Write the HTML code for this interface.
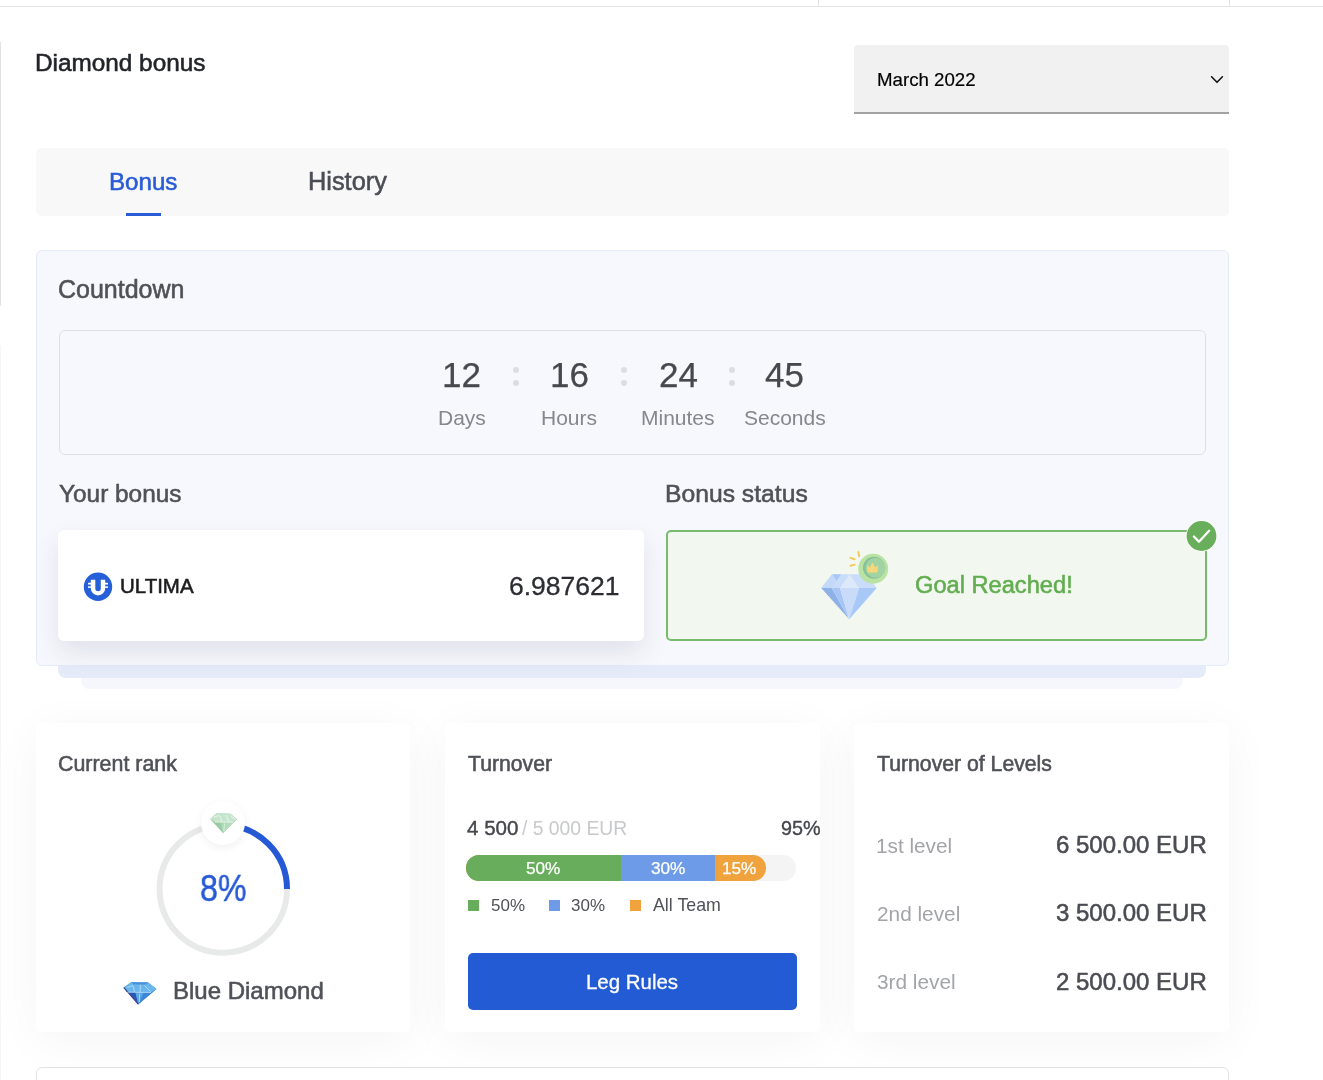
<!DOCTYPE html>
<html>
<head>
<meta charset="utf-8">
<style>
html,body{margin:0;padding:0;}
body{width:1323px;height:1080px;position:relative;overflow:hidden;background:#ffffff;font-family:"Liberation Sans",sans-serif;}
.a{position:absolute;box-sizing:border-box;}
.t{position:absolute;white-space:nowrap;will-change:transform;font-family:"Liberation Sans",sans-serif;font-weight:400;}
</style>
</head>
<body>
<!-- top table remnants -->
<div class="a" style="left:0;top:6px;width:1323px;height:1px;background:#e4e4e4"></div>
<div class="a" style="left:818px;top:0;width:1px;height:6px;background:#e4e4e4"></div>
<div class="a" style="left:1229px;top:0;width:1px;height:6px;background:#e4e4e4"></div>
<!-- left edge line -->
<div class="a" style="left:0;top:42px;width:1px;height:264px;background:#e2e2e2"></div>
<div class="a" style="left:0;top:345px;width:1px;height:735px;background:#f6f6f6"></div>

<!-- select -->
<div class="a" style="left:854px;top:45px;width:375px;height:69px;background:#f1f1f1;border-bottom:2px solid #a2a2a2;border-radius:4px 4px 0 0"></div>
<svg class="a" style="left:1209px;top:74px" width="16" height="11" viewBox="0 0 16 11"><path d="M2.6 2.8 L8 8.3 L13.4 2.8" fill="none" stroke="#111" stroke-width="1.6" stroke-linecap="round" stroke-linejoin="round"/></svg>

<!-- tabs -->
<div class="a" style="left:36px;top:148px;width:1193px;height:68px;background:#f8f8f8;border-radius:5px"></div>
<div class="a" style="left:126px;top:213px;width:35px;height:3px;background:#2a5bd7"></div>

<!-- panel layers -->
<div class="a" style="left:81px;top:650px;width:1102px;height:39px;background:#f5f7fd;border-radius:0 0 8px 8px"></div>
<div class="a" style="left:58px;top:650px;width:1148px;height:28px;background:#e5ebf8;border-radius:0 0 8px 8px"></div>
<div class="a" style="left:36px;top:250px;width:1193px;height:416px;background:#f6f8fd;border:1px solid #e3eaf8;border-radius:6px"></div>

<!-- countdown box -->
<div class="a" style="left:59px;top:330px;width:1147px;height:125px;border:1px solid #dfe0e4;border-radius:6px"></div>
<div class="a" style="left:512.7px;top:366.5px;width:6px;height:6px;border-radius:3px;background:#dcdde2"></div>
<div class="a" style="left:512.7px;top:380.3px;width:6px;height:6px;border-radius:3px;background:#dcdde2"></div>
<div class="a" style="left:620.7px;top:366.5px;width:6px;height:6px;border-radius:3px;background:#dcdde2"></div>
<div class="a" style="left:620.7px;top:380.3px;width:6px;height:6px;border-radius:3px;background:#dcdde2"></div>
<div class="a" style="left:728.9px;top:366.5px;width:6px;height:6px;border-radius:3px;background:#dcdde2"></div>
<div class="a" style="left:728.9px;top:380.3px;width:6px;height:6px;border-radius:3px;background:#dcdde2"></div>

<!-- bonus card -->
<div class="a" style="left:58px;top:530px;width:586px;height:111px;background:#ffffff;border-radius:6px;box-shadow:0 12px 26px rgba(30,35,60,0.10)"></div>
<svg class="a" style="left:80px;top:568px" width="36" height="36" viewBox="0 0 36 36">
<circle cx="18" cy="18.75" r="14.2" fill="#2560d8"/>
<path d="M10.8 11.7 H15.3 V20.5 A2.75 2.75 0 0 0 20.8 20.5 V11.7 H25.2 V20.2 A7.2 7.3 0 0 1 10.8 20.2 Z" fill="#fff"/>
<rect x="8" y="14.8" width="3" height="1.7" fill="#fff"/><rect x="8" y="18.2" width="3" height="1.8" fill="#dfe7fa"/>
<rect x="25" y="14.8" width="3" height="1.7" fill="#fff"/><rect x="25" y="18.2" width="3" height="1.8" fill="#dfe7fa"/>
</svg>

<!-- status card -->
<div class="a" style="left:666px;top:530px;width:541px;height:111px;background:#f2f8f0;border:2px solid #78bb6d;border-radius:5px"></div>
<svg class="a" style="left:800px;top:540px" width="100" height="90" viewBox="0 0 100 90">
<polygon points="32.1,34.2 65.9,34.2 76.7,47.9 21.25,47.9" fill="#c9dcfa"/>
<polygon points="32.1,34.2 41,34.2 36.5,41" fill="#a8c7f7"/>
<polygon points="40,47.9 49.5,34.2 59,47.9" fill="#dde9fb"/>
<polygon points="21.25,47.9 32.1,34.2 36.5,41 31.7,47.9" fill="#c4d9f9"/>
<polygon points="21.25,47.9 31.7,47.9 49.2,79.2" fill="#8eb1e7"/>
<polygon points="31.7,47.9 40,47.9 49.2,79.2" fill="#a7c6f6"/>
<polygon points="40,47.9 59,47.9 49.2,79.2" fill="#c8dcfa"/>
<polygon points="59,47.9 76.7,47.9 49.2,79.2" fill="#a8c9f8"/>
<circle cx="73.2" cy="28.75" r="15" fill="#b9e2a3"/>
<circle cx="74" cy="27.8" r="11" fill="#86c19b"/>
<circle cx="75.5" cy="27.8" r="10" fill="#a2d3a3"/>
<path d="M67 25 L69.8 27.5 L72.5 22.5 L75.2 27.5 L78 25 L77.4 32.5 L67.6 32.5 Z" fill="#f8d77c"/>
<path d="M58.3 12.1 L59.2 16.2 M50.4 17.9 L54.6 19.2 M50.4 25.8 L54.6 24.6" stroke="#f6c95c" stroke-width="2" stroke-linecap="round"/>
</svg>
<svg class="a" style="left:1184px;top:518px" width="36" height="36" viewBox="0 0 36 36">
<circle cx="17.5" cy="18" r="15.6" fill="#ffffff"/>
<circle cx="17.5" cy="18" r="14.9" fill="#69ae5b"/>
<path d="M9.9 18.5 L15 23.7 L25.1 12.8" fill="none" stroke="#fff" stroke-width="2.3" stroke-linecap="round" stroke-linejoin="round"/>
</svg>

<!-- bottom cards -->
<div class="a" style="left:36px;top:723px;width:374px;height:309px;background:#fff;border-radius:5px;box-shadow:0 8px 50px rgba(0,0,0,0.045)"></div>
<div class="a" style="left:445px;top:723px;width:375px;height:309px;background:#fff;border-radius:5px;box-shadow:0 8px 50px rgba(0,0,0,0.045)"></div>
<div class="a" style="left:854px;top:723px;width:375px;height:309px;background:#fff;border-radius:5px;box-shadow:0 8px 50px rgba(0,0,0,0.045)"></div>
<div class="a" style="left:36px;top:1067px;width:1193px;height:40px;background:#fff;border:1px solid #e2e4e4;border-radius:6px"></div>

<!-- gauge -->
<svg class="a" style="left:150px;top:816px" width="147" height="147" viewBox="0 0 147 147">
<circle cx="73.3" cy="73" r="63.7" fill="none" stroke="#e8e9e9" stroke-width="6"/>
<path d="M73.3 9.3 A63.7 63.7 0 0 1 137 73" fill="none" stroke="#2659d6" stroke-width="6"/>
</svg>
<div class="a" style="left:201px;top:800.5px;width:44px;height:44px;border-radius:22px;background:#fff;box-shadow:0 3px 10px rgba(0,0,0,0.06)"></div>
<svg class="a" style="left:208px;top:810px" width="32" height="26" viewBox="0 0 32 26">
<polygon points="2.3,8.9 8.6,3.1 22.6,3.75 29,9.3 15.1,22.9" fill="#a8d5b2"/>
<polygon points="2.3,8.9 8.6,3.1 22.6,3.75 29,9.3 25,12.3 7,12" fill="#c6e5cd"/>
<polygon points="2.3,8.9 7,12 12.5,12.2 15.1,22.9" fill="#98cba5"/>
<polygon points="12.5,12.2 19,12.3 15.1,22.9" fill="#acd8b6"/>
<polygon points="19,12.3 25,12.3 29,9.3 15.1,22.9" fill="#b3dcbb"/>
<path d="M6 7 L11.5 5.5 M12 6 L14 11.5 M18 5 L21 11.5 M23 6 L27 9 M16.5 13.5 L15.8 21 M7 12 L25 12.3" stroke="#ffffff" stroke-width="0.8" fill="none" opacity="0.75"/>
</svg>
<svg class="a" style="left:115px;top:970px" width="50" height="40" viewBox="0 0 50 40">
<polygon points="8.7,17.4 16.2,12.3 33.2,12.6 41.5,18.9 23.4,34.3" fill="#4f9fe6"/>
<polygon points="8.7,17.4 16.2,12.3 33.2,12.6 41.5,18.9 36,22.5 12,22.2" fill="#69b6ec"/>
<polygon points="16.2,12.3 33.2,12.6 31,14.6 18.5,14.6" fill="#4a8fdc"/>
<polygon points="8.7,17.4 12,22.2 20.5,22.6 23.4,34.3" fill="#2c57b2"/>
<polygon points="20.5,22.6 28.5,22.7 23.4,34.3" fill="#5aa8ea"/>
<polygon points="28.5,22.7 36,22.5 41.5,18.9 23.4,34.3" fill="#3d86da"/>
<path d="M8.7 17.4 L23.4 34.3" stroke="#3b3f8f" stroke-width="1.1"/>
<path d="M12.5 17.5 L18 15.5 M18 15.8 L19.5 22 M25.5 14.8 L25 23 M29.5 15.5 L35.5 21.5 M24.5 24 L24.5 32 M12 22.2 L36 22.5" stroke="#d9f0fd" stroke-width="0.7" fill="none" opacity="0.85"/>
</svg>

<!-- progress -->
<div class="a" style="left:466px;top:855px;width:330px;height:26px;background:#f4f4f4;border-radius:13px"></div>
<div class="a" style="left:466px;top:855px;width:300px;height:26px;background:#f0a23c;border-radius:13px"></div>
<div class="a" style="left:621px;top:855px;width:94px;height:26px;background:#6d9be7"></div>
<div class="a" style="left:466px;top:855px;width:155px;height:26px;background:#68ad5b;border-radius:13px 0 0 13px"></div>
<div class="a" style="left:467.5px;top:899.5px;width:11.5px;height:11.5px;background:#68ad5b"></div>
<div class="a" style="left:548.5px;top:899.5px;width:11.5px;height:11.5px;background:#6d9be7"></div>
<div class="a" style="left:629.5px;top:899.5px;width:11.5px;height:11.5px;background:#f0a23c"></div>
<!-- button -->
<div class="a" style="left:467.5px;top:953px;width:329.5px;height:57px;background:#235bd4;border-radius:5px"></div>

<div class="t" style="left:34.75px;top:50.51px;font-size:24.34px;line-height:24.34px;color:#222429;-webkit-text-stroke:0.55px currentColor;">Diamond bonus</div>
<div class="t" style="left:877.41px;top:70.67px;font-size:18.68px;line-height:18.68px;color:#000000;-webkit-text-stroke:0.2px currentColor;">March 2022</div>
<div class="t" style="left:108.87px;top:170.08px;font-size:24.14px;line-height:24.14px;color:#2a5bd7;-webkit-text-stroke:0.55px currentColor;">Bonus</div>
<div class="t" style="left:307.92px;top:168.85px;font-size:25.35px;line-height:25.35px;color:#4a4d54;-webkit-text-stroke:0.55px currentColor;">History</div>
<div class="t" style="left:57.95px;top:277.25px;font-size:25.00px;line-height:25.00px;color:#4f5157;-webkit-text-stroke:0.55px currentColor;">Countdown</div>
<div class="t" style="left:442.22px;top:356.95px;font-size:35.00px;line-height:35.00px;color:#45484e;-webkit-text-stroke:0.25px currentColor;">12</div>
<div class="t" style="left:549.84px;top:356.95px;font-size:35.00px;line-height:35.00px;color:#45484e;-webkit-text-stroke:0.25px currentColor;">16</div>
<div class="t" style="left:658.72px;top:356.95px;font-size:35.00px;line-height:35.00px;color:#45484e;-webkit-text-stroke:0.25px currentColor;">24</div>
<div class="t" style="left:765.22px;top:356.95px;font-size:35.00px;line-height:35.00px;color:#45484e;-webkit-text-stroke:0.25px currentColor;">45</div>
<div class="t" style="left:438.15px;top:406.65px;font-size:21.00px;line-height:21.00px;color:#85878c;">Days</div>
<div class="t" style="left:541.47px;top:406.65px;font-size:21.00px;line-height:21.00px;color:#85878c;">Hours</div>
<div class="t" style="left:641.31px;top:406.65px;font-size:21.00px;line-height:21.00px;color:#85878c;">Minutes</div>
<div class="t" style="left:743.53px;top:406.65px;font-size:21.00px;line-height:21.00px;color:#85878c;">Seconds</div>
<div class="t" style="left:58.61px;top:481.77px;font-size:24.39px;line-height:24.39px;color:#4f5157;-webkit-text-stroke:0.55px currentColor;">Your bonus</div>
<div class="t" style="left:665.32px;top:482.00px;font-size:24.70px;line-height:24.70px;color:#4f5157;-webkit-text-stroke:0.55px currentColor;">Bonus status</div>
<div class="t" style="left:120.47px;top:576.49px;font-size:20.48px;line-height:20.48px;color:#1c1c1e;-webkit-text-stroke:0.55px currentColor;">ULTIMA</div>
<div class="t" style="left:509.39px;top:572.98px;font-size:26.50px;line-height:26.50px;color:#2b2d32;-webkit-text-stroke:0.3px currentColor;">6.987621</div>
<div class="t" style="left:915.02px;top:573.50px;font-size:23.65px;line-height:23.65px;color:#62ad50;-webkit-text-stroke:0.55px currentColor;">Goal Reached!</div>
<div class="t" style="left:58.03px;top:754.01px;font-size:21.40px;line-height:21.40px;color:#4f5157;-webkit-text-stroke:0.55px currentColor;">Current rank</div>
<div class="t" style="left:200.11px;top:871.14px;font-size:36.30px;line-height:36.30px;color:#2659d6;transform:scaleX(0.885);transform-origin:0px 0;-webkit-text-stroke:0.5px currentColor;">8%</div>
<div class="t" style="left:172.78px;top:978.90px;font-size:24.00px;line-height:24.00px;color:#4f5157;-webkit-text-stroke:0.55px currentColor;">Blue Diamond</div>
<div class="t" style="left:467.78px;top:752.97px;font-size:21.21px;line-height:21.21px;color:#4f5157;-webkit-text-stroke:0.55px currentColor;">Turnover</div>
<div class="t" style="left:466.79px;top:818.02px;font-size:20.56px;line-height:20.56px;color:#45474c;-webkit-text-stroke:0.4px currentColor;">4 500</div>
<div class="t" style="left:521.80px;top:819.07px;font-size:19.33px;line-height:19.33px;color:#c8c9cb;">/ 5 000 EUR</div>
<div class="t" style="left:781.15px;top:818.67px;font-size:19.80px;line-height:19.80px;color:#45474c;-webkit-text-stroke:0.35px currentColor;">95%</div>
<div class="t" style="left:525.99px;top:860.18px;font-size:17.20px;line-height:17.20px;color:#ffffff;-webkit-text-stroke:0.25px currentColor;">50%</div>
<div class="t" style="left:651.18px;top:860.18px;font-size:17.20px;line-height:17.20px;color:#ffffff;-webkit-text-stroke:0.25px currentColor;">30%</div>
<div class="t" style="left:721.64px;top:860.18px;font-size:17.20px;line-height:17.20px;color:#ffffff;-webkit-text-stroke:0.25px currentColor;">15%</div>
<div class="t" style="left:490.62px;top:896.95px;font-size:17.00px;line-height:17.00px;color:#505258;">50%</div>
<div class="t" style="left:571.29px;top:896.95px;font-size:17.00px;line-height:17.00px;color:#505258;">30%</div>
<div class="t" style="left:652.80px;top:896.87px;font-size:17.80px;line-height:17.80px;color:#505258;">All Team</div>
<div class="t" style="left:585.76px;top:972.32px;font-size:20.44px;line-height:20.44px;color:#ffffff;-webkit-text-stroke:0.3px currentColor;">Leg Rules</div>
<div class="t" style="left:877.38px;top:752.86px;font-size:21.22px;line-height:21.22px;color:#4f5157;-webkit-text-stroke:0.55px currentColor;">Turnover of Levels</div>
<div class="t" style="left:876.35px;top:835.66px;font-size:20.76px;line-height:20.76px;color:#a2a4a8;">1st level</div>
<div class="t" style="left:876.96px;top:904.02px;font-size:20.80px;line-height:20.80px;color:#a2a4a8;">2nd level</div>
<div class="t" style="left:877.38px;top:972.12px;font-size:20.80px;line-height:20.80px;color:#a2a4a8;">3rd level</div>
<div class="t" style="left:1056.05px;top:832.90px;font-size:24.00px;line-height:24.00px;color:#4a4c52;-webkit-text-stroke:0.55px currentColor;">6 500.00 EUR</div>
<div class="t" style="left:1056.05px;top:900.90px;font-size:24.00px;line-height:24.00px;color:#4a4c52;-webkit-text-stroke:0.55px currentColor;">3 500.00 EUR</div>
<div class="t" style="left:1056.05px;top:970.00px;font-size:24.00px;line-height:24.00px;color:#4a4c52;-webkit-text-stroke:0.55px currentColor;">2 500.00 EUR</div>
</body>
</html>
